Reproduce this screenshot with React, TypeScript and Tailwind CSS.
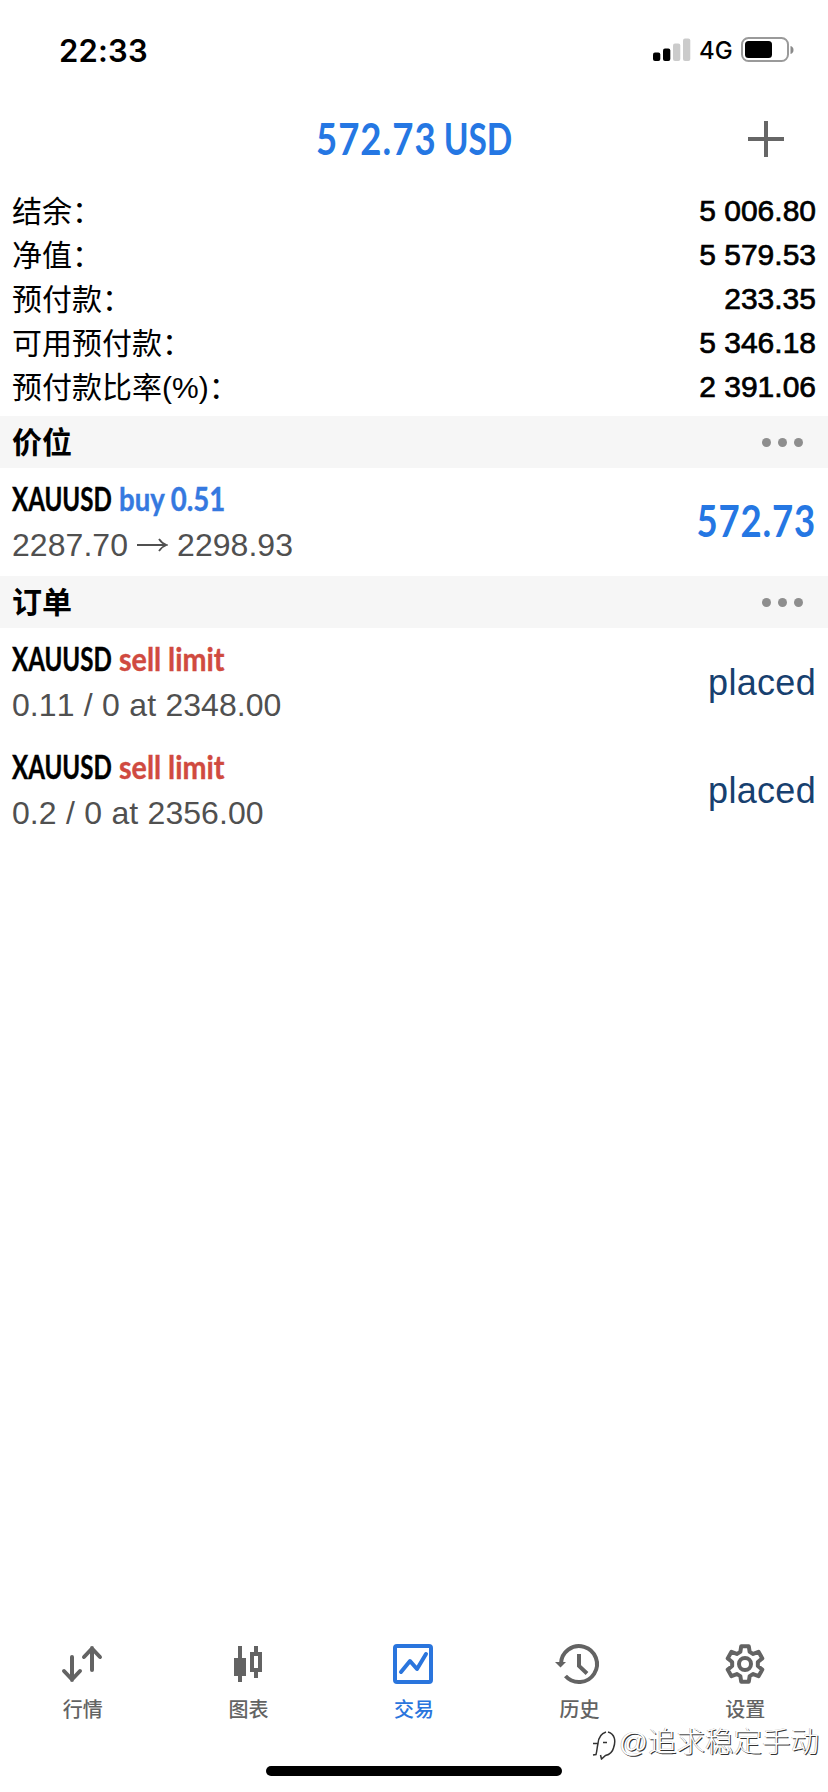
import type { ReactNode } from 'react';

const balances = [
  { label: '结余：', value: '5 006.80' },
  { label: '净值：', value: '5 579.53' },
  { label: '预付款：', value: '233.35' },
  { label: '可用预付款：', value: '5 346.18' },
  { label: '预付款比率(%)：', value: '2 391.06' },
];

const orders = [
  { symbol: 'XAUUSD', detail: '0.11 / 0 at 2348.00' },
  { symbol: 'XAUUSD', detail: '0.2 / 0 at 2356.00' },
];

// Outline of a six-toothed gear centred in a 48px box.
const gearPoints = [0, 60, 120, 180, 240, 300]
  .flatMap((tooth) =>
    [
      [13, -21],
      [18.2, -12],
      [18.2, 12],
      [13, 21],
    ].map(([r, offset]) => {
      const angle = ((tooth + offset - 90) * Math.PI) / 180;
      return `${(24 + r * Math.cos(angle)).toFixed(2)},${(24 + r * Math.sin(angle)).toFixed(2)}`;
    }),
  )
  .join(' ');

function StatusBar() {
  return (
    <div className="flex h-[100px] items-center justify-between pl-[59px] pr-[33px]">
      <div className="font-['Inter'] text-[31px] font-semibold leading-none tracking-[0.2px]">22:33</div>
      <div className="flex items-center">
        <svg width="38" height="24" viewBox="0 0 38 24">
          <rect x="0" y="14.5" width="7.3" height="8.5" rx="2" fill="#000" />
          <rect x="10" y="10.5" width="7.3" height="12.5" rx="2" fill="#000" />
          <rect x="20" y="5.5" width="7.3" height="17.5" rx="2" fill="#cbcbcb" />
          <rect x="30" y="0.5" width="7.3" height="22.5" rx="2" fill="#cbcbcb" />
        </svg>
        <div className="ml-[8px] w-[42px] pt-[2px] font-['Inter'] text-[24px] font-medium leading-none">4G</div>
        <svg width="54" height="26" viewBox="0 0 54 26">
          <rect x="1" y="1" width="46" height="23" rx="6.5" fill="none" stroke="#9a9a9a" strokeWidth="2" />
          <rect x="4" y="4" width="27" height="17" rx="3.5" fill="#000" />
          <path d="M49.5 9v8c2-.6 3-2 3-4s-1-3.400-3-4z" fill="#8a8a8a" />
        </svg>
      </div>
    </div>
  );
}

function SectionHeader({ title }: { title: string }) {
  return (
    <div className="flex h-[52px] items-center justify-between bg-[#f6f6f6] pl-[12px] pr-[25px]">
      <h2 className="pt-[2px] text-[30px] font-bold leading-none">{title}</h2>
      <div className="flex gap-[7px]">
        <span className="size-[9px] rounded-full bg-[#8e8e8e]" />
        <span className="size-[9px] rounded-full bg-[#8e8e8e]" />
        <span className="size-[9px] rounded-full bg-[#8e8e8e]" />
      </div>
    </div>
  );
}

function Row({ symbol, action, detail, right }: { symbol: string; action: ReactNode; detail: ReactNode; right: ReactNode }) {
  return (
    <div className="flex h-[108px] justify-between px-[12px]">
      <div className="pt-[12px]">
        <div className="flex h-[40px] items-center whitespace-nowrap font-['Lato'] text-[31.500px] font-bold leading-none [-webkit-text-stroke:0.4px_currentColor]">
          <div className="w-[107px]">
            <span className="inline-block origin-left scale-x-[0.765]">{symbol}</span>
          </div>
          {action}
        </div>
        <div className="flex h-[49px] items-center text-[32px] leading-none tracking-[0.05px] text-[#505050] [font-kerning:none] [word-spacing:0.4px]">
          {detail}
        </div>
      </div>
      {right}
    </div>
  );
}

function Tab({ label, active, children }: { label: string; active?: boolean; children: ReactNode }) {
  return (
    <div className={active ? 'flex flex-1 flex-col items-center text-[#2a75dd]' : 'flex flex-1 flex-col items-center text-[#636363]'}>
      <svg className="overflow-visible" width="48" height="48" viewBox="0 0 48 48" fill="none" stroke="currentColor" strokeWidth="4">
        {children}
      </svg>
      <span className="mt-[10px] text-[20px] font-medium leading-[24px]">{label}</span>
    </div>
  );
}

export default function App() {
  return (
    <div className="relative flex h-[1792px] w-[828px] flex-col overflow-hidden bg-white font-['Liberation_Sans','Noto_Sans_CJK_SC',sans-serif] text-black">
      <StatusBar />
      <header className="flex h-[88px] items-start pt-[21px]">
        <div className="w-[144px]" />
        <h1 className="flex flex-1 justify-center">
          <span className="flex w-[197px] justify-between whitespace-nowrap font-['Lato'] text-[44px] font-bold leading-[34px] text-[#2577e3]">
            <span className="w-[120px] origin-left scale-x-[0.83] tracking-[1.2px]">572.73</span>
            <span className="flex w-[68px] justify-end">
              <span className="origin-right scale-x-[0.76]">USD</span>
            </span>
          </span>
        </h1>
        <svg className="mr-[44px] ml-[64px]" width="36" height="36" viewBox="0 0 36 36">
          <path d="M18 0v36M0 18h36" stroke="#666" strokeWidth="4" />
        </svg>
      </header>
      <div className="h-[228px] px-[12px] pt-[1px]">
        {balances.map((b) => (
          <div key={b.label} className="flex h-[44px] items-center justify-between text-[30px] leading-none">
            <span className="pt-[2px]">{b.label}</span>
            <span className="[-webkit-text-stroke:0.7px_black]">{b.value}</span>
          </div>
        ))}
      </div>
      <SectionHeader title="价位" />
      <Row
        symbol="XAUUSD"
        action={<span className="origin-left scale-x-[0.875] text-[#3579e0]">buy 0.51</span>}
        detail={
          <>
            2287.70
            <svg className="mx-[9px]" width="31" height="18" viewBox="0 0 31 18" fill="none" stroke="currentColor" strokeWidth="1.800">
              <path d="M0 9h29M22 3c2 3 4.500 5 7.500 6c-3 1-5.500 3-7.500 6" />
            </svg>
            2298.93
          </>
        }
        right={
          <div className="flex h-[104px] w-[120px] items-center justify-end whitespace-nowrap">
            <span className="origin-right scale-x-[0.83] font-['Lato'] text-[44px] font-bold leading-none tracking-[1px] text-[#2577e3]">572.73</span>
          </div>
        }
      />
      <SectionHeader title="订单" />
      {orders.map((o) => (
        <Row
          key={o.detail}
          symbol={o.symbol}
          action={<span className="origin-left scale-x-[0.91] text-[#d04a40]">sell limit</span>}
          detail={o.detail}
          right={<div className="flex h-[110px] items-center text-[36px] leading-none tracking-[0.3px] text-[#17406f]">placed</div>}
        />
      ))}
      <div className="flex-1" />
      <nav className="flex h-[152px]">
        <Tab label="行情">
          <path d="M13 17v23M5 31l8 8.500 8-8.500M33 30V8M25 17l8-8.500 8 8.500" strokeLinecap="round" strokeLinejoin="round" />
        </Tab>
        <Tab label="图表">
          <path d="M10 18h12v18h-4v6h-4v-6h-4zM14 6h4v12h-4z" fill="currentColor" stroke="none" />
          <path d="M28 14h8v16h-8z" />
          <path d="M32 6v7M32 31v7" />
        </Tab>
        <Tab label="交易" active>
          <rect x="5" y="6" width="36" height="36" rx="2" />
          <path d="M11 32l9-11 7 8 9-15" strokeLinecap="round" strokeLinejoin="round" />
        </Tab>
        <Tab label="历史">
          <path d="M5 24A18 18 0 1 1 9.500 36" />
          <path d="M-1 22h11l-5.500 5.500z" fill="currentColor" stroke="none" />
          <path d="M23 14v12l8 7.500" />
        </Tab>
        <Tab label="设置">
          <polygon points={gearPoints} strokeLinejoin="round" />
          <circle cx="24" cy="24" r="6" />
        </Tab>
      </nav>
      <div className="absolute bottom-[16px] left-[266px] h-[10px] w-[296px] rounded-full bg-black" />
      <div className="absolute left-[590px] top-[1724px] flex items-center whitespace-nowrap font-['Liberation_Sans','Noto_Sans_CJK_SC_Light','Noto_Sans_CJK_SC',sans-serif] text-[28.500px] font-light leading-[36px] text-white [text-shadow:1px_1px_0_#333,-0.5px_-0.5px_0.5px_#aaa]">
        <svg width="29" height="36" viewBox="0 0 29 36" fill="none" stroke="#333" strokeWidth="1.500">
          <path d="M3 31l3-.5c1-3 1-7 2-11c.500-6 3-10 8-11.500M3 19.500h4.500M13 18.500h4" />
          <path d="M18 8c7 2 8 9 5.500 16c-1 4-4 6.500-8 7.500l-4.500 4M10.500 31l1 4" />
        </svg>
        @追求稳定手动
      </div>
    </div>
  );
}
